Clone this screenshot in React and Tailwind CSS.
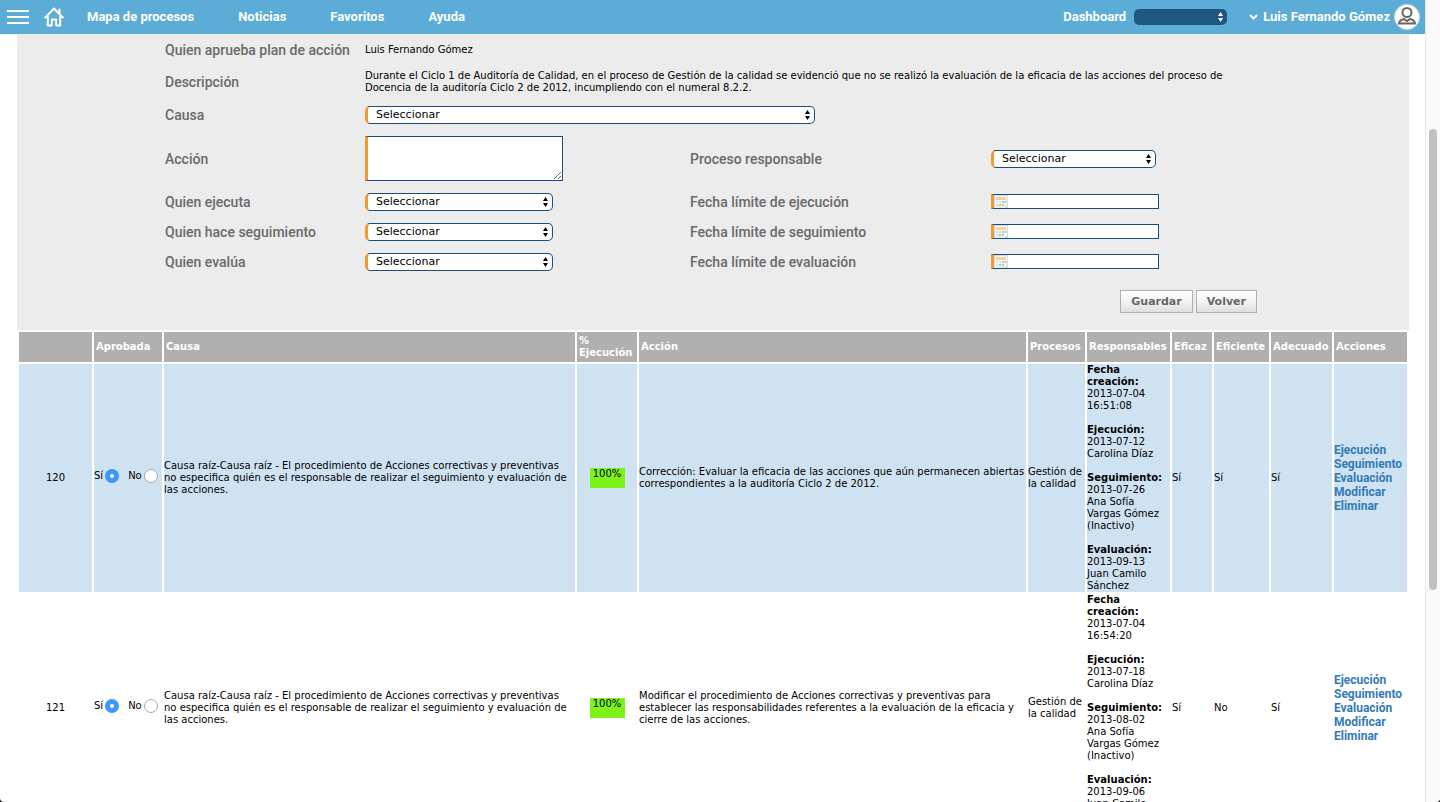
import React, { useState } from "react";

const people = ["Seleccionar", "Luis Fernando Gómez", "Carolina Díaz", "Juan Camilo Sánchez"];

const navItems = ["Mapa de procesos", "Noticias", "Favoritos", "Ayuda"];

const causeText =
  "Causa raíz-Causa raíz - El procedimiento de Acciones correctivas y preventivas no especifica quién es el responsable de realizar el seguimiento y evaluación de las acciones.";

const rows = [
  {
    id: 120,
    cause: causeText,
    action:
      "Corrección: Evaluar la eficacia de las acciones que aún permanecen abiertas correspondientes a la auditoría Ciclo 2 de 2012.",
    created: ["2013-07-04", "16:51:08"],
    execution: ["2013-07-12", "Carolina Díaz"],
    tracking: ["2013-07-26", "Ana Sofía", "Vargas Gómez", "(Inactivo)"],
    evaluation: ["2013-09-13", "Juan Camilo", "Sánchez"],
    effective: "Sí",
    efficient: "Sí",
    adequate: "Sí",
  },
  {
    id: 121,
    cause: causeText,
    action:
      "Modificar el procedimiento de Acciones correctivas y preventivas para establecer las responsabilidades referentes a la evaluación de la eficacia y cierre de las acciones.",
    created: ["2013-07-04", "16:54:20"],
    execution: ["2013-07-18", "Carolina Díaz"],
    tracking: ["2013-08-02", "Ana Sofía", "Vargas Gómez", "(Inactivo)"],
    evaluation: ["2013-09-06", "Juan Camilo", "Sánchez"],
    effective: "Sí",
    efficient: "No",
    adequate: "Sí",
  },
];

const columns = [
  { label: "", width: "w-[73px]" },
  { label: "Aprobada", width: "w-[68px]" },
  { label: "Causa", width: "w-[411px]" },
  { label: "% Ejecución", width: "w-[60px]" },
  { label: "Acción", width: "" },
  { label: "Procesos", width: "w-[57px]" },
  { label: "Responsables", width: "w-[83px]" },
  { label: "Eficaz", width: "w-[40px]" },
  { label: "Eficiente", width: "w-[55px]" },
  { label: "Adecuado", width: "w-[61px]" },
  { label: "Acciones", width: "w-[73px]" },
];

function Arrows({ className }) {
  return (
    <svg viewBox="0 0 5 10" className={`pointer-events-none absolute h-[10px] w-[5px] ${className}`}>
      <path d="M2.5 0 5 4H0zM2.5 10 5 6H0z" fill="currentColor" />
    </svg>
  );
}

function Select({ id, width, options = people }) {
  return (
    <div className={`relative flex items-center ${width}`}>
      <select
        id={id}
        className="h-[18px] w-full appearance-none rounded-[5px] border border-l-[3px] border-[#1c4e7b] border-l-[#f19a32] bg-white pl-2 text-[11px] leading-4 text-black"
      >
        {options.map((o) => (
          <option key={o}>{o}</option>
        ))}
      </select>
      <Arrows className="right-[5px] text-black" />
    </div>
  );
}

function CalendarIcon() {
  return (
    <svg viewBox="0 0 14 13" className="pointer-events-none absolute left-[3px] h-[13px] w-[14px]">
      <rect width="14" height="13" fill="#cddff0" />
      <rect x="1" y="1" width="12" height="12" fill="#f6f8f8" />
      <rect x="2" y="2" width="10" height="3" fill="#fbcf9f" />
      <path d="M2 6h2v2H2zM5 6h2v2H5zM2 9h2v2H2z" fill="#dbe4e4" />
      <path d="M8 6h2v2H8zM10.500 6h2v2h-2zM5 9h2v2H5zM8 9h2v2H8z" fill="#bccbaa" />
      <path d="M3 12h7" stroke="#dbe4e4" />
      <path d="M10 13l4-4v4z" fill="#cddff0" />
    </svg>
  );
}

function DateInput({ id }) {
  return (
    <div className="relative mb-[2px] flex w-[168px] items-center">
      <input
        id={id}
        type="text"
        className="h-[15px] w-full border border-l-[3px] border-[#1c4e7b] border-l-[#f19a32] bg-white pl-5 text-[10px]"
      />
      <CalendarIcon />
    </div>
  );
}

function Label({ htmlFor, children }) {
  return (
    <label htmlFor={htmlFor} className="font-[Roboto,sans-serif] text-[14px] leading-5 font-medium text-[#6a6a6a]">
      {children}
    </label>
  );
}

function Row({ height, children }) {
  return (
    <div className={`grid grid-cols-[200px_325px_301px_1fr] items-center ${height}`}>{children}</div>
  );
}

function Header() {
  return (
    <header className="flex h-[34px] shrink-0 items-center bg-[#5badd7] font-[Roboto,sans-serif] text-[13px] font-bold text-white">
      <button aria-label="Menú" className="ml-[7px]">
        <svg viewBox="0 0 22 16" className="h-4 w-[22px]" stroke="currentColor" strokeWidth="2">
          <path d="M0 2h22M0 8h22M0 14h22" />
        </svg>
      </button>
      <a href="#inicio" aria-label="Inicio" className="ml-[15px]">
        <svg viewBox="0 0 20 20" className="h-5 w-5" fill="none" stroke="currentColor" strokeWidth="2" strokeLinejoin="round" strokeLinecap="round">
          <path d="M1.200 10.500 10 1.500l8.800 9M3.800 9v9.500h4V12.500h4.400v6h4V9" />
          <path d="M15.500 2.500v4" />
        </svg>
      </a>
      <nav className="ml-[23px] flex gap-11">
        {navItems.map((item) => (
          <a key={item} href="#nav">
            {item}
          </a>
        ))}
      </nav>
      <div className="ml-auto flex items-center">
        <label htmlFor="dashboard">Dashboard</label>
        <div className="relative ml-2 flex w-[93px] items-center">
          <select id="dashboard" className="h-4 w-full appearance-none rounded-[5px] bg-[#1f5682] text-[11px]">
            <option></option>
          </select>
          <Arrows className="right-1 text-white" />
        </div>
        <button className="ml-[22px] mr-[5px] flex items-center">
          <svg viewBox="0 0 9 6" className="mr-[5px] h-[6px] w-[9px]" fill="none" stroke="currentColor" strokeWidth="2">
            <path d="M1 1l3.500 3.500L8 1" />
          </svg>
          Luis Fernando Gómez
          <svg viewBox="0 0 26 26" className="ml-1 h-[26px] w-[26px]">
            <circle cx="13" cy="13" r="12.500" fill="#fff" stroke="#d8d8d8" />
            <g fill="none" stroke="#666" strokeWidth="2">
              <circle cx="13" cy="8.500" r="4.500" />
              <path d="M5 19.500c.5-3 2.500-4 5-4.500l3 2 3-2c2.500.5 4.500 1.500 5 4.500z" />
            </g>
          </svg>
        </button>
      </div>
    </header>
  );
}

function ActionForm() {
  const button =
    "h-[23px] border border-[#b0b0b0] bg-linear-to-b from-white via-[#f4f4f4] to-[#dedede] px-[10px] text-[11px] font-bold text-[#666]";
  return (
    <form className="bg-[#ececec] pt-[2px] pb-[17px]" onSubmit={(e) => e.preventDefault()}>
      <div className="mx-auto max-w-[1096px]">
        <Row height="h-[28px]">
          <Label>Quien aprueba plan de acción</Label>
          <span className="col-span-3">Luis Fernando Gómez</span>
        </Row>
        <Row height="h-[36px]">
          <Label>Descripción</Label>
          <p className="col-span-3 max-w-[870px]">
            Durante el Ciclo 1 de Auditoría de Calidad, en el proceso de Gestión de la calidad se
            evidenció que no se realizó la evaluación de la eficacia de las acciones del proceso de
            Docencia de la auditoría Ciclo 2 de 2012, incumpliendo con el numeral 8.2.2.
          </p>
        </Row>
        <Row height="h-[30px]">
          <Label htmlFor="causa">Causa</Label>
          <div className="col-span-3">
            <Select id="causa" width="w-[450px]" options={["Seleccionar", "Causa raíz"]} />
          </div>
        </Row>
        <Row height="h-[57px]">
          <Label htmlFor="accion">Acción</Label>
          <textarea
            id="accion"
            className="h-[45px] w-[198px] border border-l-[3px] border-[#1c4e7b] border-l-[#f19a32] bg-white"
          />
          <Label htmlFor="proceso">Proceso responsable</Label>
          <Select id="proceso" width="w-[165px]" options={["Seleccionar", "Gestión de la calidad"]} />
        </Row>
        <Row height="h-[30px]">
          <Label htmlFor="ejecuta">Quien ejecuta</Label>
          <Select id="ejecuta" width="w-[188px]" />
          <Label htmlFor="fecha-ejecucion">Fecha límite de ejecución</Label>
          <DateInput id="fecha-ejecucion" />
        </Row>
        <Row height="h-[30px]">
          <Label htmlFor="seguimiento">Quien hace seguimiento</Label>
          <Select id="seguimiento" width="w-[188px]" />
          <Label htmlFor="fecha-seguimiento">Fecha límite de seguimiento</Label>
          <DateInput id="fecha-seguimiento" />
        </Row>
        <Row height="h-[30px]">
          <Label htmlFor="evalua">Quien evalúa</Label>
          <Select id="evalua" width="w-[188px]" />
          <Label htmlFor="fecha-evaluacion">Fecha límite de evaluación</Label>
          <DateInput id="fecha-evaluacion" />
        </Row>
        <div className="mt-[13px] flex justify-end gap-[3px] pr-1">
          <button type="submit" className={button}>Guardar</button>
          <button type="button" className={button}>Volver</button>
        </div>
      </div>
    </form>
  );
}

function Approved({ id }) {
  const [value, setValue] = useState("Sí");
  return (
    <div className="mb-1 flex gap-[9px]">
      {["Sí", "No"].map((o) => (
        <label key={o} className="flex items-center gap-[2px]">
          {o}
          <input
            type="radio"
            name={`aprobada-${id}`}
            checked={value === o}
            onChange={() => setValue(o)}
            className="size-[14px] appearance-none rounded-full border border-[#a8a8a8] bg-white checked:border-[5px] checked:border-[#3b99fc]"
          />
        </label>
      ))}
    </div>
  );
}

function Stage({ title, lines }) {
  return (
    <div>
      <b>{title}</b>
      {lines.map((line) => (
        <div key={line}>{line}</div>
      ))}
    </div>
  );
}

function ActionsTable() {
  return (
    <table className="w-full table-fixed border-separate border-spacing-[2px]">
      <colgroup>
        {columns.map((c, i) => (
          <col key={i} className={c.width} />
        ))}
      </colgroup>
      <thead>
        <tr className="h-[30px] bg-[#b0b0b0] text-left text-white">
          {columns.map((c, i) => (
            <th key={i} className="px-[2px] py-0 font-bold">
              {c.label}
            </th>
          ))}
        </tr>
      </thead>
      <tbody>
        {rows.map((r) => (
          <tr key={r.id} className="odd:bg-[#cfe2f1]">
            <td className="p-0 text-center">{r.id}</td>
            <td className="p-0">
              <Approved id={r.id} />
            </td>
            <td className="py-0 pr-1 pl-0">{r.cause}</td>
            <td className="p-0">
              <div className="mx-auto h-5 w-[35px] bg-[#7df31a] text-center">100%</div>
            </td>
            <td className="p-0">{r.action}</td>
            <td className="p-0">Gestión de la calidad</td>
            <td className="p-0">
              <div className="flex flex-col gap-3">
                <Stage title="Fecha creación:" lines={r.created} />
                <Stage title="Ejecución:" lines={r.execution} />
                <Stage title="Seguimiento:" lines={r.tracking} />
                <Stage title="Evaluación:" lines={r.evaluation} />
              </div>
            </td>
            <td className="p-0">{r.effective}</td>
            <td className="p-0">{r.efficient}</td>
            <td className="p-0">{r.adequate}</td>
            <td className="p-0 font-[Roboto,sans-serif] text-[12px] leading-[14px] font-bold text-[#337ab7]">
              {["Ejecución", "Seguimiento", "Evaluación", "Modificar", "Eliminar"].map((a) => (
                <a key={a} href={`#${a}`} className="block">
                  {a}
                </a>
              ))}
            </td>
          </tr>
        ))}
      </tbody>
    </table>
  );
}

export default function App() {
  return (
    <div className="h-screen bg-black">
      <div className="flex h-full overflow-hidden rounded-b-[4px] bg-white font-['DejaVu_Sans',Verdana,sans-serif] text-[10px] leading-3 text-black">
        <div className="flex min-w-0 flex-1 flex-col">
          <Header />
          <main className="min-h-0 flex-1 overflow-hidden pr-4 pl-[17px]">
            <ActionForm />
            <ActionsTable />
          </main>
        </div>
        <div className="flex w-[15px] flex-col items-center border-l border-[#e8e8e8] bg-[#fafafa]">
          <div className="mt-[129px] h-[461px] w-2 rounded-full bg-[#c1c1c1]" />
        </div>
      </div>
    </div>
  );
}
